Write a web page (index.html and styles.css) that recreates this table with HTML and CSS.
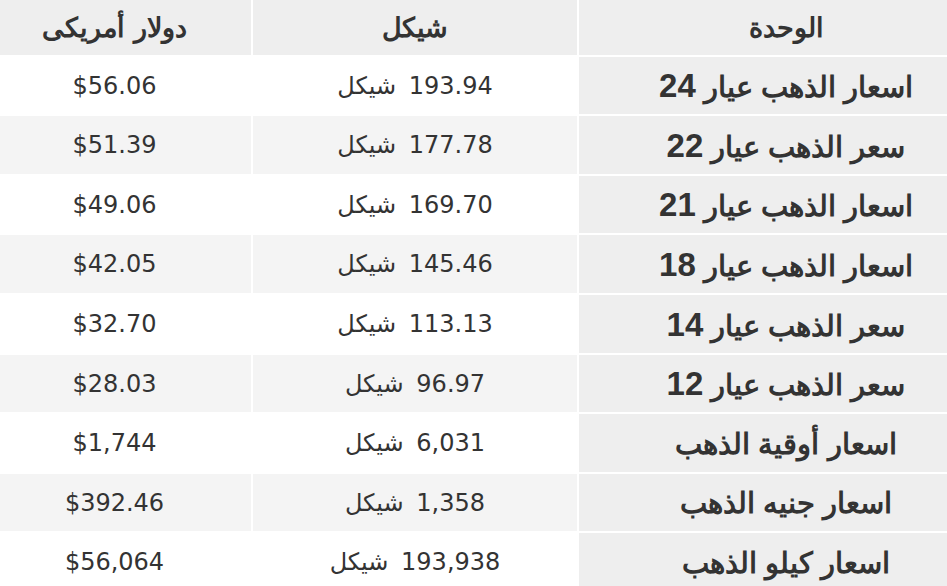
FILE: index.html
```html
<!DOCTYPE html>
<html lang="ar" dir="rtl">
<head>
<meta charset="utf-8">
<link rel="stylesheet" href="styles.css">
</head>
<body>
<table class="prices">
  <colgroup>
    <col class="c-unit">
    <col class="c-ils">
    <col class="c-usd">
  </colgroup>
  <thead>
    <tr><th>الوحدة</th><th>شيكل</th><th>دولار أمريكى</th></tr>
  </thead>
  <tbody>
    <tr><td class="unit">اسعار الذهب عيار <span class="carat">24</span></td><td class="ils">193.94 شيكل</td><td>$56.06</td></tr>
    <tr><td class="unit">سعر الذهب عيار <span class="carat">22</span></td><td class="ils">177.78 شيكل</td><td>$51.39</td></tr>
    <tr><td class="unit">اسعار الذهب عيار <span class="carat">21</span></td><td class="ils">169.70 شيكل</td><td>$49.06</td></tr>
    <tr><td class="unit">اسعار الذهب عيار <span class="carat">18</span></td><td class="ils">145.46 شيكل</td><td>$42.05</td></tr>
    <tr><td class="unit">سعر الذهب عيار <span class="carat">14</span></td><td class="ils">113.13 شيكل</td><td>$32.70</td></tr>
    <tr><td class="unit">سعر الذهب عيار <span class="carat">12</span></td><td class="ils">96.97 شيكل</td><td>$28.03</td></tr>
    <tr><td class="unit">اسعار أوقية الذهب</td><td class="ils">6,031 شيكل</td><td>$1,744</td></tr>
    <tr><td class="unit">اسعار جنيه الذهب</td><td class="ils">1,358 شيكل</td><td>$392.46</td></tr>
    <tr><td class="unit">اسعار كيلو الذهب</td><td class="ils">193,938 شيكل</td><td>$56,064</td></tr>
  </tbody>
</table>
</body>
</html>
```
FILE: styles.css
```css
html, body {
  margin: 0;
  padding: 0;
  overflow: hidden;
  background: #ffffff;
}

.prices {
  direction: rtl;
  table-layout: fixed;
  border-collapse: separate;
  border-spacing: 2px;
  width: 1019px;
  margin: -2px -48px 0 -22px;
  color: #333333;
  font-family: "DejaVu Sans", Verdana, sans-serif;
  font-size: 24px;
}

.c-unit { width: 414px; }
.c-ils { width: 324px; }
.c-usd { width: 273px; }

.prices th {
  background: #eeeeee;
  font-family: "DejaVu Serif", "Liberation Serif", serif;
  font-weight: bold;
  font-size: 27px;
  height: 54.6px;
  padding: 0;
  text-align: center;
  vertical-align: middle;
}

.prices td {
  height: 55.6px;
  padding: 2px 0 0;
  text-align: center;
  vertical-align: middle;
  background: #ffffff;
  line-height: 1.4;
}

.prices td.ils {
  word-spacing: 5px;
}

.prices tbody tr:nth-child(even) td {
  background: #f4f4f4;
}

.prices td.unit,
.prices tbody tr:nth-child(even) td.unit {
  background: #eeeeee;
  font-family: "Liberation Sans", Arial, sans-serif;
  font-weight: bold;
  font-size: 29px;
}

.carat {
  font-size: 33px;
}
```
